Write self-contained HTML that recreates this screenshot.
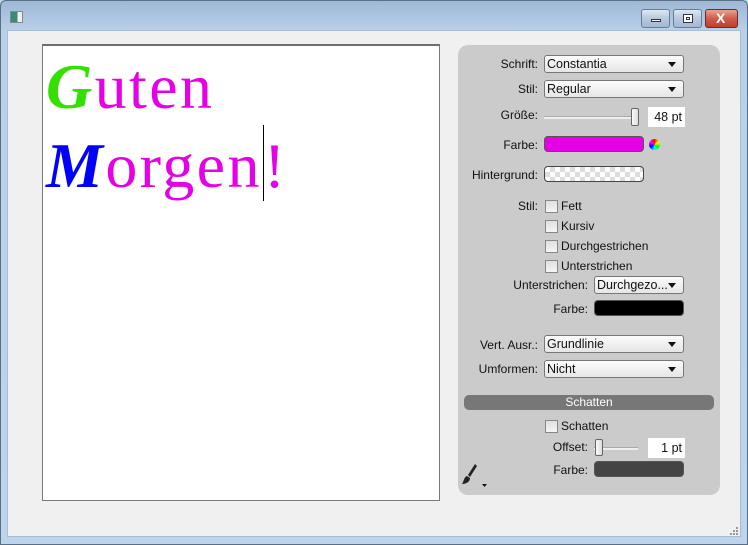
<!DOCTYPE html>
<html><head><meta charset="utf-8"><style>
*{box-sizing:border-box;margin:0;padding:0}
body{width:748px;height:545px;overflow:hidden;position:relative;font-family:"Liberation Sans",sans-serif;font-size:12px;color:#111;background:#bcd3ea}
.frame{position:absolute;left:0;top:0;width:748px;height:545px;border:1px solid #5a6e85;border-radius:6px 6px 0 0;background:linear-gradient(#9db7d5,#b9d0e9 30px,#bdd4ec)}
.client{position:absolute;left:7px;top:30px;width:734px;height:507px;background:#f0f0f0;border:1px solid #a8bcd4}
.a{position:absolute}
.btn{position:absolute;top:9px;height:19px;border:1px solid #6a7d94;border-radius:3px;background:linear-gradient(#dde7f2,#b7c9de 50%,#a3b9d3)}
.editor{left:42px;top:44px;width:398px;height:457px;background:#fff;border:1px solid #7a7a7a;border-top:2px solid #6e6e6e}
.txt{font-family:"Liberation Serif",serif;font-size:64px;letter-spacing:2.4px;color:#e600e6;position:absolute;left:3px;line-height:79px}
.panel{left:458px;top:45px;width:262px;height:450px;background:#cbcbcb;border-radius:10px}
.lbl{position:absolute;text-align:right;font-size:12px}
.sel{position:absolute;height:18px;border:1px solid #777;border-radius:3px;background:linear-gradient(#fbfbfb,#e6e6e6);padding-left:2px;font-size:12.5px;line-height:16px}
.sel:after{content:"";position:absolute;right:7px;top:6px;border-left:4px solid transparent;border-right:4px solid transparent;border-top:5px solid #111}
.sw{position:absolute;height:16px;border:1px solid #555;border-radius:4px}
.cb{position:absolute;width:13px;height:13px;border:1px solid #888;background:linear-gradient(#e0e0e0,#f5f5f5)}
.num{position:absolute;background:#fff;height:20px;text-align:right;padding-right:3px;line-height:20px;font-size:12.5px}
</style></head><body>
<div class="frame"></div>
<div class="a" style="left:10px;top:11px;width:13px;height:12px;border:1px solid #888;background:linear-gradient(90deg,#3a8a7a 60%,#eee 60%)"></div>
<div class="btn" style="left:641px;width:29px"><div class="a" style="left:9px;top:9px;width:10px;height:3px;background:#fff;border:1px solid #334"></div></div>
<div class="btn" style="left:673px;width:29px"><div class="a" style="left:9px;top:4px;width:10px;height:9px;background:#fff;border:1px solid #334"><div style="margin:2px;height:3px;border:1px solid #334"></div></div></div>
<div class="btn" style="left:705px;width:33px;border-color:#6b2b26;background:linear-gradient(#e9a396,#cf5c4b 50%,#c03f2c)"><div class="a" style="left:10px;top:0;color:#fff;font-weight:bold;font-size:14px;line-height:17px">X</div></div>
<div class="client"></div>
<div class="a editor">
<div class="txt" style="top:1px"><i style="color:#33e000;font-weight:bold">G</i>uten</div>
<div class="txt" style="top:79px"><i style="color:#0000ff;font-weight:bold">M</i>orgen<span style="border-left:1px solid #000;margin-left:1px;display:inline-block;height:76px;vertical-align:-14px"></span>!</div>
</div>
<div class="a panel"></div>
<div class="lbl" style="left:458px;width:80px;top:57px">Schrift:</div>
<div class="sel" style="left:544px;top:55px;width:140px">Constantia</div>
<div class="lbl" style="left:458px;width:80px;top:82px">Stil:</div>
<div class="sel" style="left:544px;top:80px;width:140px">Regular</div>
<div class="lbl" style="left:458px;width:80px;top:108px">Größe:</div>
<div class="a" style="left:544px;top:116px;width:94px;height:3px;background:#eee;border-top:1px solid #aaa"></div>
<div class="a" style="left:631px;top:108px;width:8px;height:18px;border:1px solid #666;border-radius:2px;background:linear-gradient(90deg,#fafafa,#ddd)"></div>
<div class="num" style="left:648px;top:107px;width:37px">48 pt</div>
<div class="lbl" style="left:458px;width:80px;top:138px">Farbe:</div>
<div class="sw" style="left:544px;top:136px;width:100px;background:#e600e6"></div>
<div class="a" style="left:649px;top:139px;width:11px;height:11px;border-radius:50%;background:conic-gradient(red,yellow,lime,cyan,blue,magenta,red)"></div>
<div class="lbl" style="left:458px;width:80px;top:168px">Hintergrund:</div>
<div class="sw" style="left:544px;top:166px;width:100px;border-color:#444;background-color:#fff;background-image:linear-gradient(45deg,#ddd 25%,transparent 25%,transparent 75%,#ddd 75%),linear-gradient(45deg,#ddd 25%,transparent 25%,transparent 75%,#ddd 75%);background-size:10px 10px;background-position:0 0,5px 5px"></div>
<div class="lbl" style="left:458px;width:80px;top:199px">Stil:</div>
<div class="cb" style="left:545px;top:200px"></div><div class="a" style="left:561px;top:199px">Fett</div>
<div class="cb" style="left:545px;top:220px"></div><div class="a" style="left:561px;top:219px">Kursiv</div>
<div class="cb" style="left:545px;top:240px"></div><div class="a" style="left:561px;top:239px">Durchgestrichen</div>
<div class="cb" style="left:545px;top:260px"></div><div class="a" style="left:561px;top:259px">Unterstrichen</div>
<div class="lbl" style="left:458px;width:130px;top:278px">Unterstrichen:</div>
<div class="sel" style="left:594px;top:276px;width:90px">Durchgezo...</div>
<div class="lbl" style="left:458px;width:130px;top:302px">Farbe:</div>
<div class="sw" style="left:594px;top:300px;width:90px;background:#000"></div>
<div class="lbl" style="left:458px;width:80px;top:338px">Vert. Ausr.:</div>
<div class="sel" style="left:544px;top:335px;width:140px">Grundlinie</div>
<div class="lbl" style="left:458px;width:80px;top:362px">Umformen:</div>
<div class="sel" style="left:544px;top:360px;width:140px">Nicht</div>
<div class="a" style="left:464px;top:395px;width:250px;height:15px;background:#777;border-radius:5px;color:#fff;text-align:center;line-height:15px">Schatten</div>
<div class="cb" style="left:545px;top:420px"></div><div class="a" style="left:561px;top:419px">Schatten</div>
<div class="lbl" style="left:458px;width:130px;top:440px">Offset:</div>
<div class="a" style="left:594px;top:447px;width:44px;height:3px;background:#eee;border-top:1px solid #aaa"></div>
<div class="a" style="left:595px;top:439px;width:8px;height:17px;border:1px solid #666;border-radius:2px;background:linear-gradient(90deg,#fafafa,#ddd)"></div>
<div class="num" style="left:648px;top:438px;width:37px">1 pt</div>
<div class="lbl" style="left:458px;width:130px;top:463px">Farbe:</div>
<div class="sw" style="left:594px;top:461px;width:90px;background:#444"></div>
<svg class="a" style="left:462px;top:463px" width="28" height="26"><path d="M13 1 L15 3 L8 14 L6 12 Z" fill="#222"/><path d="M5 13 C2 14 2 18 0 21 C4 21 8 19 8 15 Z" fill="#222"/><path d="M20 21 L25 21 L22.5 24 Z" fill="#111"/></svg>
<svg class="a" style="left:729px;top:526px" width="10" height="10" fill="#999"><rect x="7" y="1" width="2" height="2"/><rect x="4" y="4" width="2" height="2"/><rect x="7" y="4" width="2" height="2"/><rect x="1" y="7" width="2" height="2"/><rect x="4" y="7" width="2" height="2"/><rect x="7" y="7" width="2" height="2"/></svg>
</body></html>
